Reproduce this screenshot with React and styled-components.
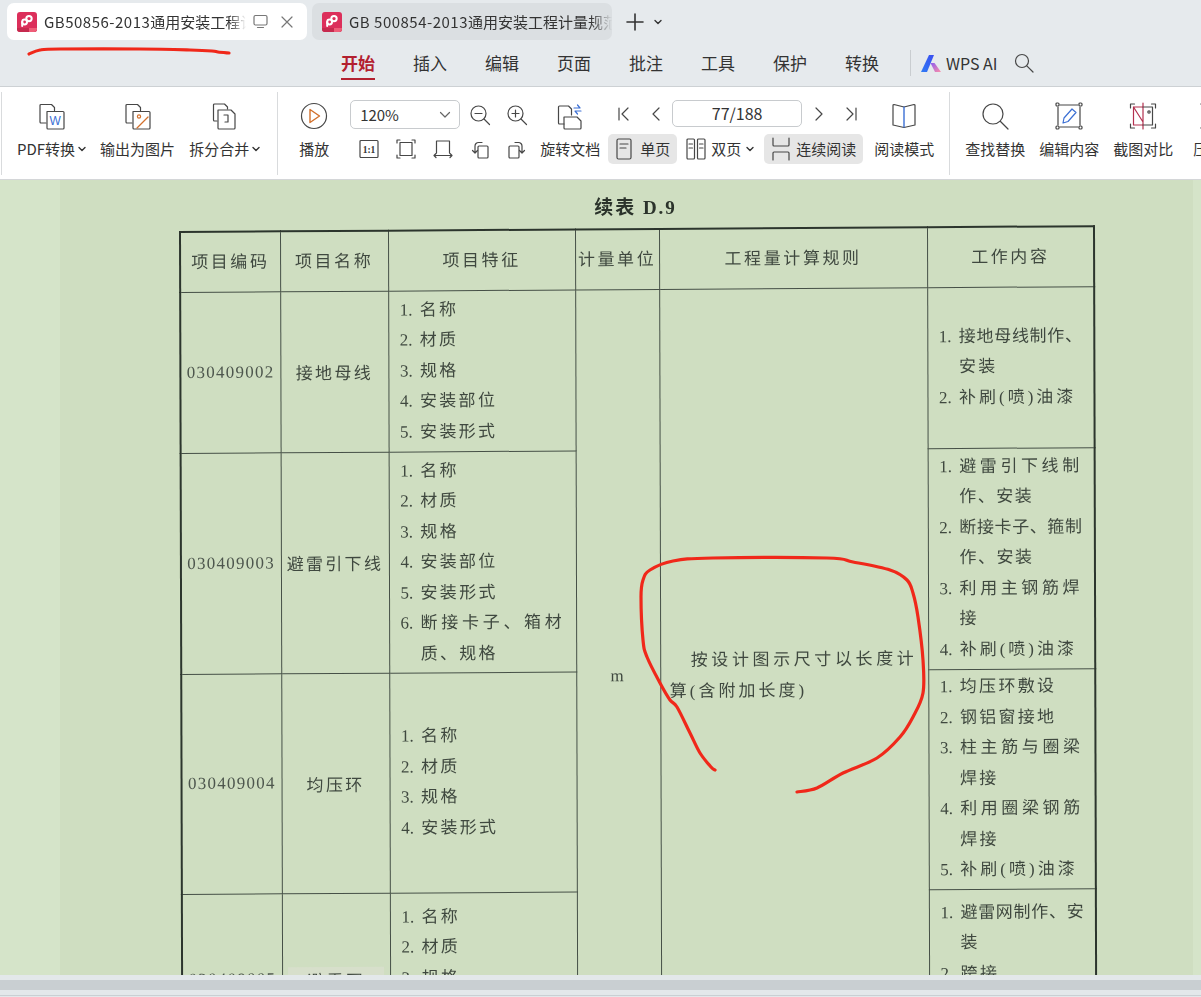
import React from "react";
import styled, { createGlobalStyle } from "styled-components";

const GlobalStyle = createGlobalStyle`
  html, body { margin: 0; padding: 0; }
  body { font-family: "Noto Sans CJK SC", "Liberation Sans", sans-serif; }
  * { box-sizing: border-box; }
`;

const Screen = styled.div`
  position: relative;
  width: 1201px;
  height: 997px;
  overflow: hidden;
  background: #e6eaed;
  color: #333;
  display: flex;
  flex-direction: column;
`;

/* ---------- tabs ---------- */
const TabBar = styled.div`
  height: 43px;
  padding: 3px 0 0 7px;
  display: flex;
  align-items: flex-start;
  gap: 5px;
  flex: none;
`;

const Tab = styled.div`
  width: 300px;
  height: 37px;
  border-radius: 7px;
  background: ${(p) => (p.$active ? "#ffffff" : "#dbdfe2")};
  display: flex;
  align-items: center;
  padding-left: 10px;
  gap: 7px;
`;

const TabTitle = styled.div`
  flex: 1;
  min-width: 0;
  white-space: nowrap;
  overflow: hidden;
  font-size: 15px;
  line-height: 20px;
  color: #333;
  -webkit-mask-image: linear-gradient(to right, #000 92%, transparent 100%);
  mask-image: linear-gradient(to right, #000 92%, transparent 100%);
`;

const TabCode = styled.span`
  letter-spacing: 0.5px;
`;

const TabActions = styled.div`
  display: flex;
  align-items: center;
  gap: 13px;
  padding-right: 14px;
`;

const NewTab = styled.div`
  display: flex;
  align-items: center;
  gap: 10px;
  margin: 10px 0 0 9px;
`;

/* ---------- menu ---------- */
const MenuBar = styled.div`
  height: 44px;
  flex: none;
  display: flex;
  align-items: flex-start;
  padding: 6px 0 0 341px;
  border-bottom: 1px solid #cdd1d4;
`;

const MenuItem = styled.div`
  width: 34px;
  margin-right: 38px;
  height: 31px;
  font-size: 17px;
  line-height: 28px;
  white-space: nowrap;
  font-weight: ${(p) => (p.$active ? 700 : 400)};
  color: ${(p) => (p.$active ? "#b3202f" : "#333")};
  border-bottom: 2px solid ${(p) => (p.$active ? "#b3202f" : "transparent")};
`;

const MenuDivider = styled.div`
  width: 1px;
  height: 26px;
  margin: 1px 10px 0 -7px;
  background: #c9cdd0;
`;

const AiBlock = styled.div`
  display: flex;
  align-items: center;
  height: 28px;
`;

const AiLabel = styled.div`
  font-size: 16px;
  line-height: 28px;
  margin: 0 16px 0 5px;
  color: #333;
`;

/* ---------- ribbon ---------- */
const Ribbon = styled.div`
  height: 93px;
  flex: none;
  background: #fff;
  border-bottom: 1px solid #d4d6d8;
  display: flex;
  padding: 5px 0 0 1px;
`;

const Group = styled.div`
  height: 83px;
  display: flex;
  flex: none;
  padding-top: 8px;
  padding-left: ${(p) => p.$pl}px;
  padding-right: ${(p) => p.$pr || 0}px;
  gap: ${(p) => p.$gap || 0}px;
  border-left: 1px solid #d9dbdd;
`;

const LargeButton = styled.div`
  display: flex;
  flex-direction: column;
  align-items: center;
  width: ${(p) => (p.$w ? `${p.$w}px` : "auto")};
  margin-left: ${(p) => p.$ml || 0}px;
  flex: none;
`;

const IconSlot = styled.div`
  height: 32px;
  display: flex;
  align-items: center;
  justify-content: center;
`;

const ButtonLabel = styled.div`
  margin-top: 7px;
  font-size: 15px;
  line-height: 20px;
  white-space: nowrap;
  display: flex;
  align-items: center;
  gap: 3px;
`;

const ZoomGrid = styled.div`
  display: grid;
  grid-template-columns: repeat(5, 37px);
  grid-template-rows: 29px 30px;
  row-gap: 5px;
  margin-left: 21px;
  margin-right: 5px;
  flex: none;
`;

const ZoomSelect = styled.div`
  grid-column: span 3;
  width: 110px;
  height: 29px;
  border: 1px solid #c8cbce;
  border-radius: 5px;
  display: flex;
  align-items: center;
  justify-content: space-between;
  padding: 0 8px 0 9px;
  font-size: 15px;
`;

const GridIcon = styled.div`
  display: flex;
  align-items: center;
  justify-content: center;
`;

const NavColumn = styled.div`
  width: 255px;
  margin: 0 11px 0 8px;
  flex: none;
  display: flex;
  flex-direction: column;
  gap: 7px;
`;

const NavRow = styled.div`
  display: grid;
  grid-template-columns: 31px 33px 130px 34px 30px;
  height: 27px;
`;

const PageInput = styled.div`
  height: 27px;
  border: 1px solid #c8cbce;
  border-radius: 5px;
  text-align: center;
  font-size: 16px;
  line-height: 25px;
`;

const ViewRow = styled.div`
  display: flex;
  height: 30px;
`;

const ViewToggle = styled.div`
  width: ${(p) => p.$w}px;
  margin-right: ${(p) => p.$mr || 0}px;
  height: 30px;
  border-radius: 5px;
  background: ${(p) => (p.$active ? "#e6e6e6" : "transparent")};
  display: flex;
  align-items: center;
  gap: ${(p) => p.$gap || 6}px;
  padding-left: ${(p) => p.$pl || 8}px;
  font-size: 15px;
  line-height: 28px;
  white-space: nowrap;
  flex: none;
`;

/* ---------- document ---------- */
const Viewer = styled.div`
  flex: 1;
  min-height: 0;
  overflow: hidden;
  background: #d5e4c9;
  padding: 0 8px 0 60px;
`;

const Page = styled.div`
  height: 100%;
  background: #cfdec1;
  padding: 16px 0 0 118.5px;
  overflow: hidden;
`;

const Sheet = styled.div`
  width: 914px;
  color: #3f483f;
  font-family: "Liberation Serif", "Noto Sans CJK SC", serif;
  filter: blur(0.35px);
`;

const SheetTitle = styled.div`
  text-align: center;
  font-size: 19px;
  line-height: 24px;
  font-weight: 700;
  letter-spacing: 2px;
  color: #2b332b;
  margin-bottom: 11px;
`;

/* the scan is skewed: rows climb to the right more than columns lean */
const Table = styled.table`
  width: 914px;
  table-layout: fixed;
  border-collapse: collapse;
  transform-origin: 0 0;
  transform: matrix(1, -0.0064, 0.0028, 1, 0, 0);
  border: 2px solid #2c352d;
  border-bottom: none;
  font-size: 17px;
`;

const Row = styled.tr`
  height: ${(p) => p.$h}px;
`;

const HeadCell = styled.th`
  font-weight: 400;
  text-align: center;
  padding: 0 0 4px;
  letter-spacing: 2.6px;
  white-space: nowrap;
  border: 1px solid #465047;
  border-bottom: 1.5px solid #465047;
`;

const Cell = styled.td`
  padding: ${(p) => p.$pt || 0}px 0 0 ${(p) => p.$pl || 0}px;
  text-align: ${(p) => (p.$pl ? "left" : "center")};
  vertical-align: ${(p) => (p.$pt ? "top" : "middle")};
  border: 1px solid #465047;
  letter-spacing: ${(p) => (p.$code ? "1.25px" : "2.3px")};
  color: ${(p) => (p.$code ? "#4d564d" : "inherit")};
  white-space: nowrap;
`;

const NamePatch = styled.span`
  display: inline-block;
  width: 96px;
  background: #d7dfcb;
`;

const RuleText = styled.div`
  padding-left: 9px;
  text-align: left;
  line-height: 31px;
`;

const RuleLine = styled.div`
  padding-left: ${(p) => p.$indent || 0}px;
  letter-spacing: ${(p) => p.$track}px;
`;

const ListItem = styled.div`
  display: flex;
  line-height: 30.5px;
`;

const ItemNumber = styled.div`
  width: 20px;
  flex: none;
  letter-spacing: 0;
`;

const ItemLine = styled.div`
  letter-spacing: ${(p) => p.$track}px;
`;

const RedInk = styled.svg`
  position: absolute;
  left: 0;
  top: 0;
  width: 1201px;
  height: 997px;
  pointer-events: none;
`;

/* ---------- scroll bar ---------- */
const BottomBar = styled.div`
  height: 22px;
  flex: none;
  background: #e3e8ea;
  padding-top: 5px;
`;

const ScrollTrack = styled.div`
  height: 10px;
  background: #c9cfd2;
`;

const BottomLine = styled.div`
  height: 1px;
  margin-top: 5px;
  background: #c9d0d3;
`;

/* ---------- icons ---------- */
const Ico = styled.svg`
  width: ${(p) => p.$s}px;
  height: ${(p) => p.$h || p.$s}px;
  display: block;
  flex: none;
  fill: none;
  stroke: ${(p) => p.$c || "#474747"};
  stroke-width: ${(p) => p.$sw || 1.2};
  stroke-linecap: round;
  stroke-linejoin: round;
`;

const CaretDown = () => (
  <Ico $s={8} $h={6} $c="#333" $sw={1.4} viewBox="0 0 8 6">
    <path d="M1 1.5l3 3 3-3" />
  </Ico>
);

const PdfLogo = () => (
  <Ico $s={20} viewBox="0 0 20 20">
    <rect x="0" y="0" width="20" height="20" rx="3" fill="#dc2f5b" stroke="none" />
    <path d="M0 16h20v1a3 3 0 0 1-3 3H3a3 3 0 0 1-3-3z" fill="#c62a4e" stroke="none" />
    <path d="M12 16h8v1a3 3 0 0 1-3 3h-5z" fill="#ef5d78" stroke="none" />
    <circle cx="12" cy="6.6" r="2.7" stroke="#fff" strokeWidth="2" />
    <circle cx="7.6" cy="10" r="2.4" stroke="#fff" strokeWidth="2" />
    <path d="M5.2 10v4" stroke="#fff" strokeWidth="2" />
  </Ico>
);

const BackDoc = () => <path d="M8 21H3a1 1 0 0 1-1-1V3.5a1 1 0 0 1 1-1h10.5l3 3v3" />;

const PdfIcon = () => (
  <Ico $s={28} viewBox="0 0 28 28">
    <BackDoc />
    <path d="M9 9.5h16a1 1 0 0 1 1 1V26a1 1 0 0 1-1 1H10a1 1 0 0 1-1-1z" />
    <text x="11.5" y="23" fontSize="12" fill="#3b6fd4" stroke="none" fontFamily="Liberation Sans">W</text>
  </Ico>
);

const ImageIcon = () => (
  <Ico $s={28} viewBox="0 0 28 28">
    <BackDoc />
    <path d="M9 9.5h16a1 1 0 0 1 1 1V26a1 1 0 0 1-1 1H10a1 1 0 0 1-1-1z" />
    <circle cx="15" cy="14.5" r="1.6" stroke="#d2702c" />
    <path d="M13 26l11-11" stroke="#d2702c" />
  </Ico>
);

const SplitIcon = () => (
  <Ico $s={28} viewBox="0 0 28 28">
    <path d="M6 19H3.5a1 1 0 0 1-1-1V3a1 1 0 0 1 1-1h10l3 3v2" />
    <path d="M7 8h13l4 4v14a1 1 0 0 1-1 1H8a1 1 0 0 1-1-1z" />
    <path d="M13 13h4v7h-3" />
  </Ico>
);

const PlayIcon = () => (
  <Ico $s={28} viewBox="0 0 28 28">
    <circle cx="14" cy="14" r="12.5" />
    <path d="M10 7.5l9.5 6.5-9.5 6.5z" stroke="#d2702c" strokeWidth="1.4" />
  </Ico>
);

const ZoomIcon = ({ plus }) => (
  <Ico $s={22} viewBox="0 0 22 22">
    <circle cx="9.5" cy="9.5" r="7.5" />
    <path d="M15 15l5.5 5.5M6 9.5h7" />
    {plus && <path d="M9.5 6v7" />}
  </Ico>
);

const ChevronSmall = () => (
  <Ico $s={12} $h={8} $c="#666" viewBox="0 0 12 8">
    <path d="M1.5 1.5L6 6l4.5-4.5" />
  </Ico>
);

const OneToOne = () => (
  <Ico $s={20} viewBox="0 0 20 20">
    <rect x="1" y="1.5" width="18" height="17" rx="1" />
    <text x="10" y="14" textAnchor="middle" fontSize="9.5" fontWeight="700" fill="#333" stroke="none" fontFamily="Liberation Serif">1:1</text>
  </Ico>
);

const FitPage = () => (
  <Ico $s={20} viewBox="0 0 20 20">
    <rect x="4" y="3.5" width="12" height="13" />
    <path d="M1 4V1h3M16 1h3v3M1 16v3h3M19 16v3h-3" />
  </Ico>
);

const FitWidth = () => (
  <Ico $s={20} viewBox="0 0 20 20">
    <path d="M3.5 14V2h13v12M1 16.5h18M3 14.5l-2 2 2 2M17 14.5l2 2-2 2" />
  </Ico>
);

const RotateLeft = () => (
  <Ico $s={20} viewBox="0 0 20 20">
    <rect x="8" y="7" width="10" height="12" rx="1" />
    <path d="M5 14V7a3.5 3.5 0 0 1 3.5-3.5H12M2.5 11.5L5 14l2.5-2.5" />
  </Ico>
);

const RotateRight = () => (
  <Ico $s={20} viewBox="0 0 20 20">
    <rect x="2" y="7" width="10" height="12" rx="1" />
    <path d="M15 14V7a3.5 3.5 0 0 0-3.5-3.5H8M12.5 11.5L15 14l2.5-2.5" />
  </Ico>
);

const RotateDoc = () => (
  <Ico $s={28} viewBox="0 0 28 28">
    <path d="M8 22H3.5a1 1 0 0 1-1-1V5a1 1 0 0 1 1-1h9l3 3v6" />
    <path d="M8 15h13l4 4v7a1 1 0 0 1-1 1H9a1 1 0 0 1-1-1z" />
    <path d="M18 6h6l-2.5-3M25 9h-6l2.5 3" stroke="#3b6fd4" />
  </Ico>
);

const BookIcon = () => (
  <Ico $s={26} viewBox="0 0 26 26">
    <path d="M13 4L3 1.500a1 1 0 0 0-1 1V22l11 2.500L24 22V2.500a1 1 0 0 0-1-1z" />
    <path d="M13 4v20" stroke="#3b6fd4" strokeWidth="1.4" />
  </Ico>
);

const NavIcon = ({ d }) => (
  <GridIcon>
    <Ico $s={14} $h={16} viewBox="0 0 14 16">
      <path d={d} />
    </Ico>
  </GridIcon>
);

const SingleIcon = () => (
  <Ico $s={16} $h={22} viewBox="0 0 16 22">
    <rect x="1" y="1" width="14" height="20" rx="1.5" />
    <path d="M4 6h8M4 10h6" />
  </Ico>
);

const DoubleIcon = () => (
  <Ico $s={20} $h={22} viewBox="0 0 20 22">
    <rect x="1" y="1" width="7.5" height="20" rx="1" />
    <rect x="11.5" y="1" width="7.5" height="20" rx="1" />
    <path d="M3 6h3.500M3 10h3.500M13.500 6H17M13.500 10H17" />
  </Ico>
);

const ContinuousIcon = () => (
  <Ico $s={18} $h={24} viewBox="0 0 18 24">
    <path d="M1 1v7a1 1 0 0 0 1 1h14a1 1 0 0 0 1-1V1M1 23v-7a1 1 0 0 1 1-1h14a1 1 0 0 1 1 1v7" />
  </Ico>
);

const SearchLarge = () => (
  <Ico $s={28} viewBox="0 0 28 28">
    <circle cx="12" cy="12" r="10" />
    <path d="M19.5 19.5L27 27" />
  </Ico>
);

const EditIcon = () => (
  <Ico $s={28} viewBox="0 0 28 28">
    <path d="M3 5v18M25 5v18M5 3h18M5 25h18" />
    <rect x="1" y="1" width="3" height="3" rx="1" />
    <rect x="24" y="1" width="3" height="3" rx="1" />
    <rect x="1" y="24" width="3" height="3" rx="1" />
    <rect x="24" y="24" width="3" height="3" rx="1" />
    <path d="M8 21l1-5 8-9 4 3.5-8 9z" stroke="#3b6fd4" />
  </Ico>
);

const CompareIcon = () => (
  <Ico $s={28} viewBox="0 0 28 28">
    <path d="M1.5 6V2h4M22.5 2h4v4M1.5 22v4h4M26.5 22v4h-4" />
    <path d="M14 5H4.5v18H14M14 1v26M4.5 5L14 20" stroke="#b3304f" />
    <path d="M14 5h9.5v18H14" />
    <circle cx="20" cy="10" r="1.2" />
  </Ico>
);

const CompressIcon = () => (
  <Ico $s={18} $h={28} viewBox="0 0 18 28">
    <path d="M2 2c4 4 4 20 0 24M8 2h8M8 26h8M8 2v24" />
  </Ico>
);

const CloseIcon = () => (
  <Ico $s={12} $c="#777" viewBox="0 0 12 12">
    <path d="M1 1l10 10M11 1L1 11" />
  </Ico>
);

const MonitorIcon = () => (
  <Ico $s={15} $c="#777" viewBox="0 0 15 15">
    <rect x="1" y="1.5" width="13" height="9.5" rx="1.5" />
    <path d="M4.5 13.5h6" />
  </Ico>
);

const PlusIcon = () => (
  <Ico $s={18} $c="#333" $sw={1.6} viewBox="0 0 18 18">
    <path d="M9 1v16M1 9h16" />
  </Ico>
);

const AiLogo = () => (
  <Ico $s={20} $h={17} viewBox="0 0 20 17">
    <defs>
      <linearGradient id="aiBlue" x1="0" y1="1" x2="1" y2="0">
        <stop offset="0" stopColor="#2f7bf5" />
        <stop offset="1" stopColor="#3a4ef0" />
      </linearGradient>
      <linearGradient id="aiPink" x1="0" y1="0" x2="1" y2="1">
        <stop offset="0" stopColor="#8b5cf0" />
        <stop offset="1" stopColor="#ff8fa8" />
      </linearGradient>
    </defs>
    <path d="M0 17L8 0h5L6 17z" fill="url(#aiBlue)" stroke="none" />
    <path d="M9.500 8h4L20 17h-6z" fill="url(#aiPink)" stroke="none" />
  </Ico>
);

const SearchSmall = () => (
  <Ico $s={20} viewBox="0 0 20 20">
    <circle cx="8" cy="8" r="6.5" />
    <path d="M12.8 12.8L19 19" />
  </Ico>
);

/* ---------- data ---------- */
const MENU = ["插入", "编辑", "页面", "批注", "工具", "保护", "转换"];

const t = (text, track = 2.3) => ({ text, track });

const ROWS = [
  {
    h: 161,
    featurePad: 4,
    code: "030409002",
    name: "接地母线",
    features: [
      [t("名称")],
      [t("材质")],
      [t("规格")],
      [t("安装部位")],
      [t("安装形式")],
    ],
    work: [
      [t("接地母线制作、", 0.7), t("安装")],
      [t("补刷(喷)油漆", 3)],
    ],
  },
  {
    h: 221,
    featurePad: 4,
    code: "030409003",
    name: "避雷引下线",
    features: [
      [t("名称")],
      [t("材质")],
      [t("规格")],
      [t("安装部位")],
      [t("安装形式")],
      [t("断接卡子、箱材", 3.7), t("质、规格")],
    ],
    work: [
      [t("避雷引下线制", 3.6), t("作、安装", 1.5)],
      [t("断接卡子、箍制", 0.6), t("作、安装", 1.5)],
      [t("利用主钢筋焊", 3.6), t("接")],
      [t("补刷(喷)油漆", 3)],
    ],
  },
  {
    h: 220,
    code: "030409004",
    name: "均压环",
    features: [[t("名称")], [t("材质")], [t("规格")], [t("安装形式")]],
    work: [
      [t("均压环敷设")],
      [t("钢铝窗接地")],
      [t("柱主筋与圈梁", 3.6), t("焊接")],
      [t("利用圈梁钢筋", 3.6), t("焊接")],
      [t("补刷(喷)油漆", 3)],
    ],
  },
  {
    h: 172,
    featurePad: 9,
    workPad: 8,
    patch: true,
    code: "030409005",
    name: "避雷网",
    features: [[t("名称")], [t("材质")], [t("规格")]],
    work: [[t("避雷网制作、安", 0.7), t("装")], [t("跨接")]],
  },
];

// hand-drawn marks on the screenshot, traced as points
const UNDERLINE = [[29, 54], [40, 50], [60, 49], [140, 49], [190, 50], [212, 51], [218, 52], [229, 53]];
const CIRCLE = [
  [715, 770], [711, 767], [700, 753], [690, 733], [677, 707], [670, 700], [660, 683], [647, 657],
  [643, 640], [641, 597], [643, 580], [650, 570], [673, 561], [713, 558], [827, 558], [853, 562],
  [890, 570], [907, 580], [913, 593], [918, 617], [923, 660], [923, 693], [913, 717], [900, 737],
  [877, 758], [843, 773], [817, 788], [797, 792],
];

const smooth = (pts) => {
  let d = `M${pts[0][0]} ${pts[0][1]}`;
  for (let i = 0; i < pts.length - 1; i++) {
    const p0 = pts[i - 1] || pts[i];
    const p1 = pts[i];
    const p2 = pts[i + 1];
    const p3 = pts[i + 2] || p2;
    const c1x = p1[0] + (p2[0] - p0[0]) / 6;
    const c1y = p1[1] + (p2[1] - p0[1]) / 6;
    const c2x = p2[0] - (p3[0] - p1[0]) / 6;
    const c2y = p2[1] - (p3[1] - p1[1]) / 6;
    d += `C${c1x} ${c1y} ${c2x} ${c2y} ${p2[0]} ${p2[1]}`;
  }
  return d;
};

const ItemList = ({ items }) =>
  items.map((lines, i) => (
    <ListItem key={i}>
      <ItemNumber>{i + 1}.</ItemNumber>
      <div>
        {lines.map((line) => (
          <ItemLine key={line.text} $track={line.track}>
            {line.text}
          </ItemLine>
        ))}
      </div>
    </ListItem>
  ));

const App = () => (
  <Screen>
    <GlobalStyle />
    <TabBar>
      <Tab $active>
        <PdfLogo />
        <TabTitle><TabCode>GB50856-2013</TabCode>通用安装工程计量规范</TabTitle>
        <TabActions>
          <MonitorIcon />
          <CloseIcon />
        </TabActions>
      </Tab>
      <Tab>
        <PdfLogo />
        <TabTitle><TabCode>GB 500854-2013</TabCode>通用安装工程计量规范</TabTitle>
      </Tab>
      <NewTab>
        <PlusIcon />
        <CaretDown />
      </NewTab>
    </TabBar>

    <MenuBar>
      <MenuItem $active>开始</MenuItem>
      {MENU.map((m) => (
        <MenuItem key={m}>{m}</MenuItem>
      ))}
      <MenuDivider />
      <AiBlock>
        <AiLogo />
        <AiLabel>WPS AI</AiLabel>
        <SearchSmall />
      </AiBlock>
    </MenuBar>

    <Ribbon>
      <Group $pl={15} $pr={17} $gap={14}>
        <LargeButton>
          <IconSlot><PdfIcon /></IconSlot>
          <ButtonLabel>PDF转换<CaretDown /></ButtonLabel>
        </LargeButton>
        <LargeButton>
          <IconSlot><ImageIcon /></IconSlot>
          <ButtonLabel>输出为图片</ButtonLabel>
        </LargeButton>
        <LargeButton>
          <IconSlot><SplitIcon /></IconSlot>
          <ButtonLabel>拆分合并<CaretDown /></ButtonLabel>
        </LargeButton>
      </Group>

      <Group $pl={21} $pr={15}>
        <LargeButton $w={30}>
          <IconSlot><PlayIcon /></IconSlot>
          <ButtonLabel>播放</ButtonLabel>
        </LargeButton>
        <ZoomGrid>
          <ZoomSelect>120%<ChevronSmall /></ZoomSelect>
          <GridIcon><ZoomIcon /></GridIcon>
          <GridIcon><ZoomIcon plus /></GridIcon>
          <GridIcon><OneToOne /></GridIcon>
          <GridIcon><FitPage /></GridIcon>
          <GridIcon><FitWidth /></GridIcon>
          <GridIcon><RotateLeft /></GridIcon>
          <GridIcon><RotateRight /></GridIcon>
        </ZoomGrid>
        <LargeButton $w={60}>
          <IconSlot><RotateDoc /></IconSlot>
          <ButtonLabel>旋转文档</ButtonLabel>
        </LargeButton>
        <NavColumn>
          <NavRow>
            <NavIcon d="M2 2v12M11 2L5 8l6 6" />
            <NavIcon d="M10 2L4 8l6 6" />
            <PageInput>77/188</PageInput>
            <NavIcon d="M4 2l6 6-6 6" />
            <NavIcon d="M3 2l6 6-6 6M12 2v12" />
          </NavRow>
          <ViewRow>
            <ViewToggle $active $w={69} $mr={8} $gap={8}>
              <SingleIcon />单页
            </ViewToggle>
            <ViewToggle $w={70} $mr={9} $pl={1} $gap={5}>
              <DoubleIcon />双页<CaretDown />
            </ViewToggle>
            <ViewToggle $active $w={99} $gap={6}>
              <ContinuousIcon />连续阅读
            </ViewToggle>
          </ViewRow>
        </NavColumn>
        <LargeButton $w={60}>
          <IconSlot><BookIcon /></IconSlot>
          <ButtonLabel>阅读模式</ButtonLabel>
        </LargeButton>
      </Group>

      <Group $pl={15} $gap={14}>
        <LargeButton $w={60}>
          <IconSlot><SearchLarge /></IconSlot>
          <ButtonLabel>查找替换</ButtonLabel>
        </LargeButton>
        <LargeButton $w={60}>
          <IconSlot><EditIcon /></IconSlot>
          <ButtonLabel>编辑内容</ButtonLabel>
        </LargeButton>
        <LargeButton $w={60}>
          <IconSlot><CompareIcon /></IconSlot>
          <ButtonLabel>截图对比</ButtonLabel>
        </LargeButton>
        <LargeButton $w={30} $ml={6}>
          <IconSlot><CompressIcon /></IconSlot>
          <ButtonLabel>压缩</ButtonLabel>
        </LargeButton>
      </Group>
    </Ribbon>

    <Viewer>
      <Page>
        <Sheet>
          <SheetTitle>续表 D.9</SheetTitle>
          <Table>
            <colgroup>
              <col width="100" />
              <col width="108" />
              <col width="187" />
              <col width="84" />
              <col width="268" />
              <col width="167" />
            </colgroup>
            <tbody>
              <Row $h={60}>
                <HeadCell>项目编码</HeadCell>
                <HeadCell>项目名称</HeadCell>
                <HeadCell>项目特征</HeadCell>
                <HeadCell>计量单位</HeadCell>
                <HeadCell>工程量计算规则</HeadCell>
                <HeadCell>工作内容</HeadCell>
              </Row>
              {ROWS.map((row, i) => (
                <Row key={row.code} $h={row.h}>
                  <Cell $code>{row.code}</Cell>
                  <Cell>{row.patch ? <NamePatch>{row.name}</NamePatch> : row.name}</Cell>
                  <Cell $pl={11} $pt={row.featurePad}>
                    <ItemList items={row.features} />
                  </Cell>
                  {i === 0 && (
                    <>
                      <Cell rowSpan={4}>m</Cell>
                      <Cell rowSpan={4}>
                        <RuleText>
                          <RuleLine $indent={21} $track={3.6}>按设计图示尺寸以长度计</RuleLine>
                          <RuleLine $track={3}>算(含附加长度)</RuleLine>
                        </RuleText>
                      </Cell>
                    </>
                  )}
                  <Cell $pl={11} $pt={row.workPad}>
                    <ItemList items={row.work} />
                  </Cell>
                </Row>
              ))}
            </tbody>
          </Table>
        </Sheet>
      </Page>
    </Viewer>

    <BottomBar>
      <ScrollTrack />
      <BottomLine />
    </BottomBar>

    <RedInk viewBox="0 0 1201 997" fill="none" stroke="#f0281a" strokeWidth="3.2" strokeLinecap="round" strokeLinejoin="round">
      <path d={smooth(UNDERLINE)} />
      <path d={smooth(CIRCLE)} />
    </RedInk>
  </Screen>
);

export default App;
